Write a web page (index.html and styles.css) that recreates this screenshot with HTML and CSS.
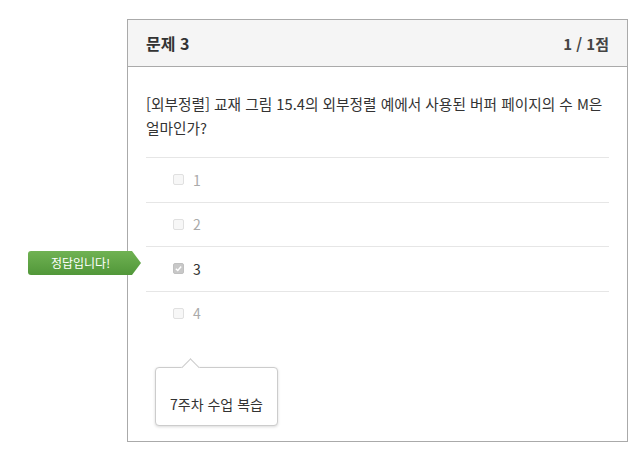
FILE: index.html
```html
<!DOCTYPE html>
<html lang="ko">

<head>
    <meta charset="UTF-8">
    <meta name="viewport" content="width=device-width, initial-scale=1.0">
    <title>문제 3</title>
    <link rel="stylesheet" href="styles.css">
</head>

<body>
    <div class="card">
        <div class="card-head">
            <h2 class="title">문제 3</h2>
            <span class="score">1 / 1점</span>
        </div>

        <div class="card-body">
            <p class="question">[외부정렬] 교재 그림 15.4의 외부정렬 예에서 사용된 버퍼 페이지의 수 M은 얼마인가?</p>

            <ul class="answers">
                <li class="answer"><span class="box"></span><span class="num">1</span></li>
                <li class="answer"><span class="box"></span><span class="num">2</span></li>
                <li class="answer picked">
                    <span class="badge">정답입니다!</span>
                    <span class="box checked">
                        <svg viewBox="0 0 10 10" width="9" height="9"><path d="M2 5.2 L4.2 7.3 L8 2.8" fill="none" stroke="#fff" stroke-width="1.6"/></svg>
                    </span>
                    <span class="num">3</span>
                </li>
                <li class="answer"><span class="box"></span><span class="num">4</span></li>
            </ul>

            <!-- 해설 말풍선 -->
            <div class="tip">7주차 수업 복습</div>
        </div>
    </div>
</body>

</html>
```

FILE: styles.css
```css
* {
    margin: 0;
    padding: 0;
    box-sizing: border-box;
}

body {
    background: #fff;
    font-family: "Noto Sans CJK KR", "Noto Sans", sans-serif;
    color: #333;
}

.card {
    position: relative;
    margin: 19px 0 0 127px;
    width: 501px;
    height: 423px;
    border: 1px solid #aaa;
}

.card-head {
    height: 47px;
    display: flex;
    justify-content: space-between;
    align-items: center;
    padding: 0 18px;
    background: #f5f5f5;
    border-bottom: 1px solid #aaa;
}

.title {
    font-size: 16px;
    font-weight: bold;
    color: #333;
}

.score {
    font-size: 15px;
    font-weight: bold;
    color: #444;
}

.card-body {
    padding: 25px 18px 0;
}

.question {
    font-size: 14.7px;
    line-height: 24px;
    color: #333;
    word-break: keep-all;
}

.answers {
    list-style: none;
    margin-top: 17px;
}

.answer {
    position: relative;
    height: 44.5px;
    display: flex;
    align-items: center;
    padding-left: 27px;
    border-top: 1px solid #e6e6e6;
}

.box {
    width: 11px;
    height: 11px;
    border: 1px solid #e0e0e0;
    border-radius: 2px;
    background: #f7f7f7;
    margin-right: 9px;
    display: flex;
    align-items: center;
    justify-content: center;
}

.box.checked {
    background: #c8c8c8;
    border-color: #c0c0c0;
}

.num {
    font-size: 14px;
    color: #aaa;
}

.picked .num {
    color: #333;
}

/* 정답 배지 */
.badge {
    position: absolute;
    left: -118px;
    top: 4px;
    width: 113px;
    height: 24px;
    line-height: 24px;
    padding-right: 8px;
    text-align: center;
    font-size: 12px;
    color: #fff;
    background: linear-gradient(#70b253, #519739);
    border-radius: 3px 0 0 3px;
    clip-path: polygon(0 0, 104px 0, 113px 50%, 104px 100%, 0 100%);
}

/* 말풍선 */
.tip {
    position: relative;
    display: inline-block;
    margin: 32px 0 0 9px;
    padding: 26px 14px 10px;
    font-size: 14px;
    line-height: 21px;
    color: #333;
    background: #fff;
    border: 1px solid #ccc;
    border-radius: 4px;
    box-shadow: 0 1px 3px rgba(0, 0, 0, 0.15);
}

.tip::before {
    content: "";
    position: absolute;
    top: -7px;
    left: 28px;
    width: 12px;
    height: 12px;
    background: #fff;
    border-left: 1px solid #ccc;
    border-top: 1px solid #ccc;
    transform: rotate(45deg);
}
```
